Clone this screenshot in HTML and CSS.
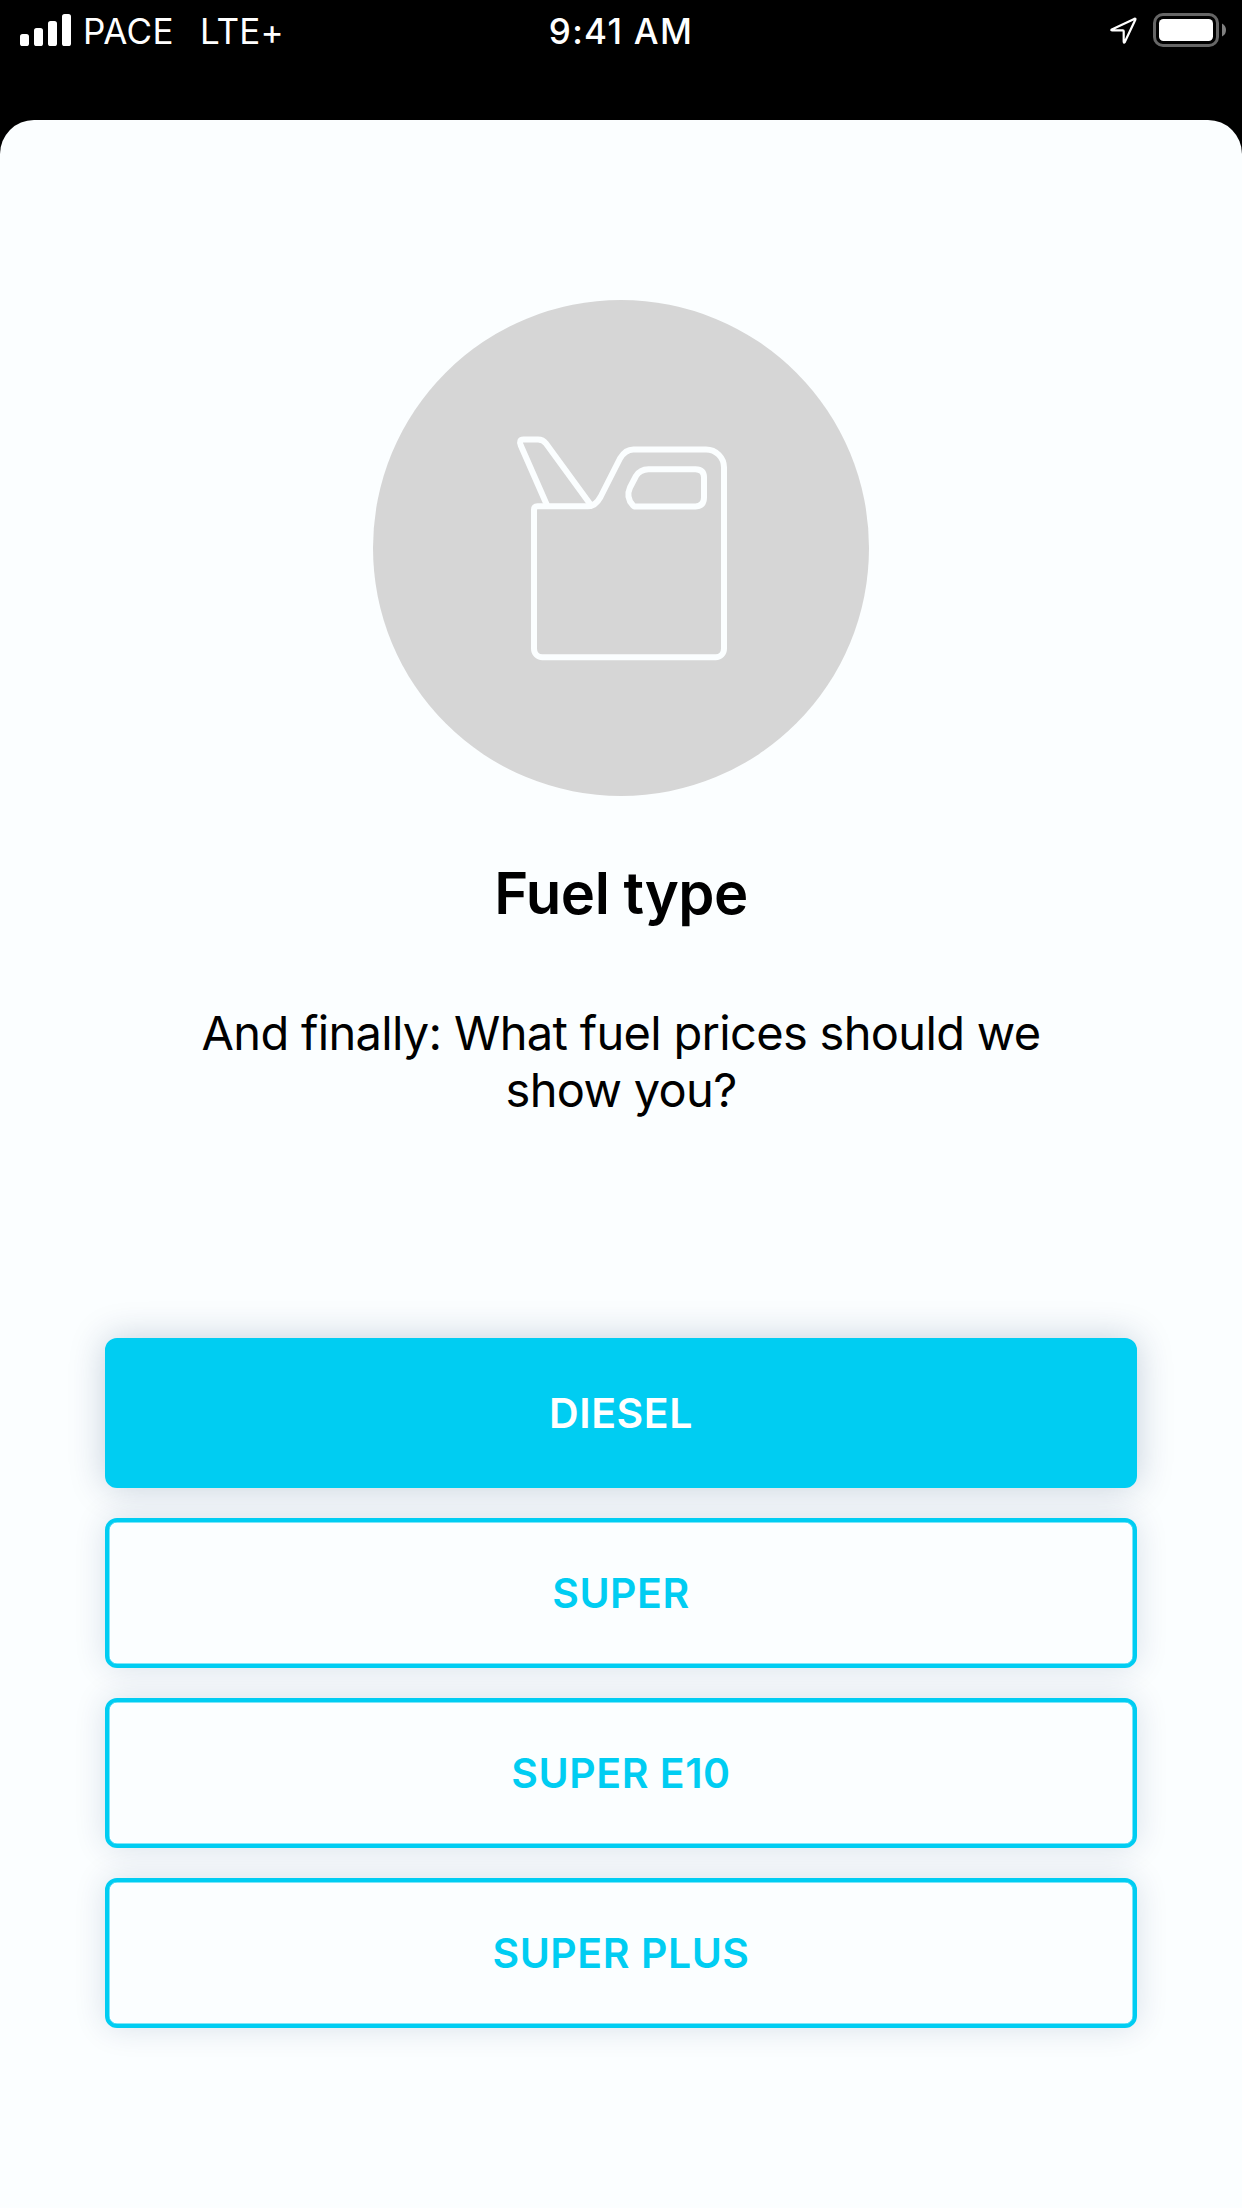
FILE: index.html
```html
<!DOCTYPE html>
<html lang="en">
<head>
<meta charset="utf-8">
<title>Fuel type</title>
<link rel="stylesheet" href="styles.css">
</head>
<body>
<header class="status-bar">
  <div class="status-left">
    <svg class="signal" width="51" height="32" viewBox="0 0 51 32" fill="#fff">
      <rect x="0" y="20" width="9" height="12" rx="2.6"/>
      <rect x="14" y="14" width="9" height="18" rx="2.6"/>
      <rect x="28" y="7" width="9" height="25" rx="2.6"/>
      <rect x="42" y="0" width="9" height="32" rx="2.6"/>
    </svg>
    <span class="carrier">PACE</span>
    <span class="network">LTE+</span>
  </div>
  <div class="clock">9:41 AM</div>
  <div class="status-right">
    <svg class="location" width="28" height="28" viewBox="0 0 28 28" fill="none" stroke="#fff" stroke-width="2.2" stroke-linejoin="round">
      <path d="M1.8 12.5 24.2 1.9Q26 1.2 25.2 3L14.8 25Q13.8 26.4 13.7 24.7V14.3Q13.7 13.4 12.8 13.4H2.4Q.6 13.2 1.8 12.5Z"/>
    </svg>
    <svg class="battery" width="73" height="34" viewBox="0 0 73 34">
      <rect x="1.5" y="1.5" width="63" height="31" rx="8.5" fill="none" stroke="#666" stroke-width="3"/>
      <rect x="6" y="6" width="54" height="22" rx="4.5" fill="#fff"/>
      <path d="M69 10.5Q73 12.5 73 17T69 23.5Z" fill="#808080"/>
    </svg>
  </div>
</header>
<main class="sheet">
  <div class="hero">
    <svg width="250" height="260" viewBox="0 0 250 260" fill="none" stroke="#fbfeff" stroke-width="6" stroke-linejoin="round">
      <path d="M37.5 86.2H88C93 86.2 97.5 82.500 100.500 77L120 38.500C123.500 32.500 127 29.500 133.500 29.500H206C216 29.500 224 37.500 224 47.500V228.500C224 233.500 220.500 237.300 215.500 237.300H42.500C37.500 237.300 34 233.500 34 228.500V89.800Q34 86.200 37.500 86.200Z"/>
      <path d="M48 87.500 20.800 25.500Q18.500 19.500 23.500 19.500H38Q43 19.500 46 23.500L90.500 84.500"/>
      <path d="M134.500 86.500H195.500Q204 86 204 77.500V57.500Q204 49.500 195.500 49.300H148.500Q140 49.500 136 56L130 67.500Q125.500 77.500 133 85.400Q133.800 86.400 134.500 86.500Z"/>
    </svg>
  </div>
  <h1 class="title">Fuel type</h1>
  <p class="question">And finally: What fuel prices should we show you?</p>
  <div class="options">
    <button class="option option-selected" type="button">DIESEL</button>
    <button class="option" type="button">SUPER</button>
    <button class="option" type="button">SUPER E10</button>
    <button class="option" type="button">SUPER PLUS</button>
  </div>
</main>
</body>
</html>
```
FILE: styles.css
```css
* {
  box-sizing: border-box;
}

body {
  margin: 0;
  width: 1242px;
  height: 2208px;
  overflow: hidden;
  background: #000;
  font-family: Inter, "Liberation Sans", sans-serif;
  display: flex;
  flex-direction: column;
}

.status-bar {
  height: 120px;
  padding: 0 16px 60px;
  display: grid;
  grid-template-columns: 1fr auto 1fr;
  color: #fff;
  font-size: 35px;
  line-height: 62px;
}

.status-left,
.status-right {
  display: flex;
  align-items: flex-start;
}

.status-right {
  justify-content: flex-end;
}

.signal {
  margin: 14px 0 0 4px;
}

.carrier {
  margin-left: 12px;
  letter-spacing: 0.4px;
}

.network {
  margin-left: 26px;
  letter-spacing: 0.2px;
}

.clock {
  font-weight: 500;
  letter-spacing: 1.3px;
}

.location {
  margin-top: 17px;
}

.battery {
  margin: 13px 0 0 15px;
}

.sheet {
  flex: 1;
  padding: 180px 105px 0;
  border-radius: 34px 34px 0 0;
  background: #fbfeff;
  color: #000;
  display: flex;
  flex-direction: column;
  align-items: center;
}

.hero {
  width: 496px;
  height: 496px;
  border-radius: 50%;
  background: #d6d6d6;
  display: flex;
  padding: 120px 0 0 127px;
}

.title {
  margin: 61px 0 0;
  font-size: 58px;
  line-height: 72px;
  font-weight: 600;
  letter-spacing: -0.5px;
}

.question {
  width: 900px;
  margin: 75px 0 0;
  font-size: 47px;
  line-height: 57px;
  text-align: center;
  letter-spacing: -0.68px;
}

.options {
  width: 100%;
  margin-top: 220px;
  display: flex;
  flex-direction: column;
  gap: 30px;
}

.option {
  height: 150px;
  padding: 0;
  border: 4px solid #00cdf2;
  border-radius: 12px;
  background: #fbfeff;
  box-shadow: inset 0 0 0 0.5px #00cdf2, 0 0 32px rgba(0, 40, 100, 0.14);
  color: #00cdf2;
  font-family: inherit;
  font-size: 41px;
  font-weight: 600;
  line-height: 50px;
  letter-spacing: 0.55px;
}

.option-selected {
  background: #00cdf2;
  box-shadow: 0 0 36px rgba(0, 40, 90, 0.22);
  color: #fff;
}
```
